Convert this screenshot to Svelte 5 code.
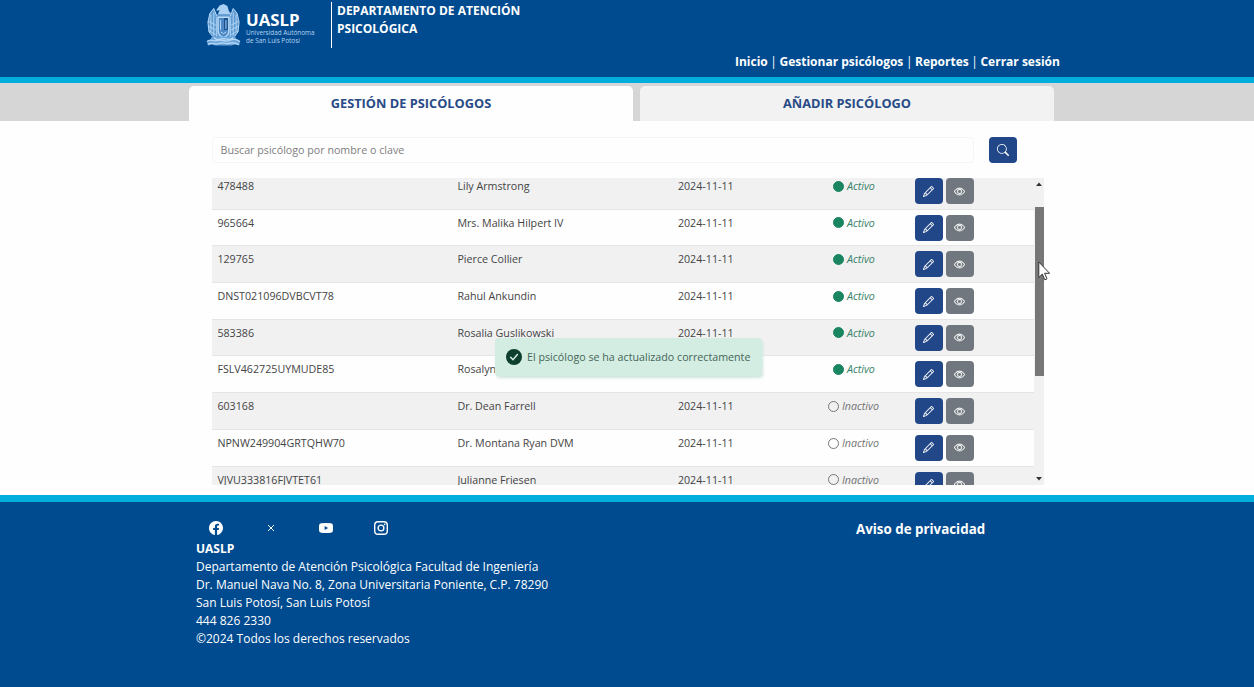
<script>
  const rows = [
    ['478488', 'Lily Armstrong', true],
    ['965664', 'Mrs. Malika Hilpert IV', true],
    ['129765', 'Pierce Collier', true],
    ['DNST021096DVBCVT78', 'Rahul Ankundin', true],
    ['583386', 'Rosalia Guslikowski', true],
    ['FSLV462725UYMUDE85', 'Rosalyn', true],
    ['603168', 'Dr. Dean Farrell', false],
    ['NPNW249904GRTQHW70', 'Dr. Montana Ryan DVM', false],
    ['VJVU333816FJVTET61', 'Julianne Friesen', false]
  ];
</script>

<div class="page">
  <header>
    <div class="brand">
      <svg class="crest" viewBox="0 0 36 44" fill="none" stroke="#b9daf7" stroke-width="1">
        <path d="M11 6l3-4 4-1.500 4 2 1.500 5 3 4H12l2-5-3 1z" fill="#a9cff2" stroke="none" />
        <path d="M8 5L4 10 2 19l1 10 4 5 5 2h12l6-2 3-5 1-10-2-9-4-5-2 6H11z" fill="#5f9bd2" stroke="none" />
        <path d="M8 5L4 10 2 19l1 10 4 5M28 5l4 5 2 9-1 10-4 5M8 5l3 8M28 5l-3 8" />
        <path d="M5 11v18M8 9v24M11 14v20M31 11v18M28 9v24M25 14v20M2 18l8 4M2 23l8 4M3 28l7 4M34 18l-8 4M34 23l-8 4M33 28l-7 4" stroke-width=".9" />
        <path d="M12.500 14h11v14c0 4-3 6-5.500 7-2.500-1-5.500-3-5.500-7z" fill="#4a87c4" stroke-width="1.400" />
        <path d="M18.500 15h4v12h-4z" fill="#174f91" stroke="none" />
        <path d="M20.500 17v9M15 17v10M15 29l3 2 3-2" />
        <path d="M6 34h24l2 4 3 1-1 4-4-1-4 1H10l-4-1-4 1-1-4 3-1z" fill="#6aa5da" stroke="none" />
        <path d="M1 39c4-4 7 1 11-1s8 2 12 0 7-2 11 1M2 42c4-3 7 1 11-1s7 1 10 0 7-1 11 1M8 35l3 2 7-1 7 1 3-2" stroke-width="1.300" />
      </svg>
      <div class="wordmark"><strong>UASLP</strong><span>Universidad Autónoma</span><span>de San Luis Potosí</span></div>
      <div class="dept">DEPARTAMENTO DE ATENCIÓN<br />PSICOLÓGICA</div>
    </div>
    <nav><b>Inicio</b><i>|</i><b>Gestionar psicólogos</b><i>|</i><b>Reportes</b><i>|</i><b>Cerrar sesión</b></nav>
  </header>

  <div class="tabs">
    <div class="tab active"><span>GESTIÓN DE PSICÓLOGOS</span></div>
    <div class="tab"><span>AÑADIR PSICÓLOGO</span></div>
  </div>

  <main>
    <div class="search">
      <div class="field">Buscar psicólogo por nombre o clave</div>
      <button aria-label="Buscar">
        <svg viewBox="0 0 16 16" width="12" height="12" fill="currentColor"><path d="M11.742 10.344a6.5 6.5 0 1 0-1.397 1.398h-.001q.044.06.098.115l3.85 3.85a1 1 0 0 0 1.415-1.414l-3.85-3.85a1 1 0 0 0-.115-.1zM12 6.5a5.5 5.5 0 1 1-11 0 5.5 5.5 0 0 1 11 0" /></svg>
      </button>
    </div>
    <div class="list">
      <div class="rows">
        {#each rows as [key, name, active]}
          <div class="row">
            <span class="key">{key}</span>
            <span class="name">{name}</span>
            <span class="date">2024-11-11</span>
            <span class="state" class:active><span class="dot"></span><em>{active ? 'Activo' : 'Inactivo'}</em></span>
            <span class="actions">
              <button aria-label="Editar">
                <svg viewBox="0 0 16 16" width="11" height="11" fill="currentColor" stroke="currentColor" stroke-width=".3"><path d="M12.146.146a.5.5 0 0 1 .708 0l3 3a.5.5 0 0 1 0 .708l-10 10a.5.5 0 0 1-.168.11l-5 2a.5.5 0 0 1-.65-.65l2-5a.5.5 0 0 1 .11-.168zM11.207 2.5 13.5 4.793 14.793 3.5 12.5 1.207zm1.586 3L10.5 3.207 4 9.707V10h.5a.5.5 0 0 1 .5.5v.5h.5a.5.5 0 0 1 .5.5v.5h.293zm-9.761 5.175-.106.106-1.528 3.821 3.821-1.528.106-.106A.5.5 0 0 1 5 12.5V12h-.5a.5.5 0 0 1-.5-.5V11h-.5a.5.5 0 0 1-.468-.325" /></svg>
              </button>
              <button class="gray" aria-label="Ver">
                <svg viewBox="0 0 16 16" width="11" height="11" fill="currentColor" stroke="currentColor" stroke-width=".4"><path d="M16 8s-3-5.500-8-5.500S0 8 0 8s3 5.500 8 5.500S16 8 16 8M1.173 8a13 13 0 0 1 1.660-2.043C4.120 4.668 5.880 3.500 8 3.500s3.879 1.168 5.168 2.457A13 13 0 0 1 14.828 8q-.086.130-.195.288c-.335.480-.830 1.120-1.465 1.755C11.879 11.332 10.119 12.500 8 12.500s-3.879-1.168-5.168-2.457A13 13 0 0 1 1.172 8z" /><path d="M8 5.500a2.500 2.500 0 1 0 0 5 2.500 2.500 0 0 0 0-5M4.500 8a3.500 3.500 0 1 1 7 0 3.500 3.500 0 0 1-7 0" /></svg>
              </button>
            </span>
          </div>
        {/each}
      </div>
      <div class="scrollbar">
        <svg width="6" height="4" viewBox="0 0 6 4"><path d="M0 4L3 0.500 6 4z" fill="#333" /></svg>
        <div class="thumb"></div>
        <svg class="down" width="6" height="4" viewBox="0 0 6 4"><path d="M0 0L3 3.500 6 0z" fill="#333" /></svg>
      </div>
    </div>
  </main>

  <footer>
    <div class="info">
      <div class="social">
        <svg viewBox="0 0 16 16" width="14" height="14" fill="currentColor"><path d="M16 8.049c0-4.446-3.582-8.050-8-8.050C3.580 0-.002 3.603-.002 8.050c0 4.017 2.926 7.347 6.750 7.951v-5.625h-2.030V8.050H6.750V6.275c0-2.017 1.195-3.131 3.022-3.131.876 0 1.791.157 1.791.157v1.980h-1.009c-.993 0-1.303.621-1.303 1.258v1.510h2.218l-.354 2.326H9.250V16c3.824-.604 6.750-3.934 6.750-7.951" /></svg>
        <svg viewBox="0 0 14 14" width="14" height="14" fill="none" stroke="currentColor"><path d="M4 4l6 6M10 4L4 10" /></svg>
        <svg viewBox="0 0 14 14" width="14" height="14"><path d="M2 2.200Q7 1.600 12 2.200 14 2.500 14 5v4q0 2.500-2 2.800-5 .500-10 0Q0 11.500 0 9V5q0-2.500 2-2.800z" fill="currentColor" /><path d="M5.600 4.900v4.200L9.200 7z" fill="#004b93" /></svg>
        <svg viewBox="0 0 14 14" width="14" height="14" fill="none" stroke="currentColor" stroke-width="1.400"><rect x=".7" y=".7" width="12.600" height="12.600" rx="3.400" /><circle cx="7" cy="7" r="2.900" /><circle cx="10.700" cy="3.300" r=".85" fill="currentColor" stroke="none" /></svg>
      </div>
      <strong>UASLP</strong>
      <p>Departamento de Atención Psicológica Facultad de Ingeniería</p>
      <p>Dr. Manuel Nava No. 8, Zona Universitaria Poniente, C.P. 78290</p>
      <p>San Luis Potosí, San Luis Potosí</p>
      <p>444 826 2330</p>
      <p>©2024 Todos los derechos reservados</p>
    </div>
    <strong class="privacy">Aviso de privacidad</strong>
  </footer>

  <div class="toast">
    <svg viewBox="0 0 16 16" width="16" height="16"><circle cx="8" cy="8" r="8" fill="#0e3f2e" /><path d="M4.600 8.200l2.400 2.500 4.400-5.200" fill="none" stroke="#d5eee3" stroke-width="1.500" stroke-linecap="round" /></svg>
    <span>El psicólogo se ha actualizado correctamente</span>
  </div>
  <svg class="cursor" viewBox="0 0 12 20" width="12" height="20"><path d="M.8 1v15.500l3.500-3.400 2.500 5.700 2.200-1-2.400-5.500h5z" fill="#fff" stroke="#333" stroke-width="1" /></svg>
</div>

<style>
  :global(body) { margin: 0; overflow: hidden; }
  .page { position: relative; width: 1254px; height: 687px; display: flex; flex-direction: column; font-family: "Open Sans", sans-serif; background: #fefefe; overflow: hidden; white-space: nowrap; }
  header { height: 77px; border-bottom: 6px solid #00aedb; background: #004b90; color: #fff; display: flex; flex-direction: column; justify-content: space-between; }
  .brand { display: flex; padding: 2px 0 0 206px; }
  .crest { width: 35px; height: 44px; margin-top: 1px; }
  .wordmark { width: 85px; padding: 9px 0 0 5px; display: flex; flex-direction: column; box-sizing: border-box; }
  .wordmark strong { font-size: 16.800px; line-height: 18px; }
  .wordmark span { font-size: 6.400px; line-height: 8px; color: #b9d5f0; }
  .dept { margin-left: 5px; height: 46px; border-left: 1px solid #fff; padding-left: 5px; font-size: 12px; line-height: 18px; font-weight: 700; }
  nav { display: flex; font-size: 12px; line-height: 16px; padding: 0 0 7px 735px; }
  nav i { font-style: normal; width: 11.700px; text-align: center; }
  .tabs { height: 38px; background: #d6d6d6; display: flex; gap: 7px; padding-left: 189px; }
  .tab { width: 414px; margin-top: 3px; background: #f2f2f2; border-radius: 5px 5px 0 0; text-align: center; color: #284b86; font-size: 12.800px; line-height: 35px; font-weight: 700; }
  .tab.active { width: 444px; background: #fefefe; }
  main { height: 374px; padding: 0 210px 0 212px; box-sizing: border-box; }
  .search { display: flex; gap: 15px; padding-top: 16px; height: 57px; box-sizing: border-box; }
  .field { width: 762px; height: 26px; box-sizing: border-box; border: 1px solid #f5f5f5; border-radius: 4px; padding-left: 7.500px; color: #7e7e7e; font-size: 10.700px; line-height: 24px; }
  button { width: 28px; height: 26px; padding: 0; border: 0; border-radius: 4px; background: #214788; color: #fff; display: flex; align-items: center; justify-content: center; }
  button.gray { background: #70777e; }
  .list { height: 307px; display: flex; overflow: hidden; }
  .rows { width: 822px; margin-top: -5px; flex: none; }
  .row { height: 36.700px; box-sizing: border-box; border-bottom: 1px solid #e5e5e5; display: grid; grid-template-columns: 240px 220.500px 150px 86.500px 1fr; padding-left: 5.400px; font-size: 10.700px; line-height: 26.400px; color: #444; }
  .row:nth-child(odd) { background: #f1f1f2; }
  .state { display: flex; gap: 3px; align-items: center; height: 26.400px; color: #737373; }
  .state.active { padding-left: 5px; color: #378269; }
  .dot { width: 11px; height: 11px; box-sizing: border-box; border: 1px solid #777; border-radius: 50%; }
  .active .dot { background: #198561; border-color: #198561; }
  .actions { display: flex; gap: 3px; padding: 5px 0 0 .5px; }
  .scrollbar { width: 10px; flex: none; background: #f1f1f1; display: flex; flex-direction: column; align-items: center; padding-top: 4px; box-sizing: border-box; }
  .thumb { width: 9px; height: 169px; margin-top: 21px; background: #777; }
  .down { margin: auto 0 4px; }
  footer { flex: 1; border-top: 7px solid #00aedb; background: #004b90; color: #fff; display: flex; }
  .info { width: 856px; padding: 19px 0 0 196px; font-size: 12px; line-height: 18px; box-sizing: border-box; flex: none; }
  .info strong { display: block; }
  .info p { margin: 0; }
  .social { display: flex; gap: 41px; padding: 0 0 4.500px 12.500px; }
  .social svg { display: block; }
  .privacy { font-size: 13.350px; line-height: 18px; padding-top: 18px; }
  .toast { position: absolute; left: 495px; top: 338px; width: 267px; height: 38px; background: #d3ede2; border-radius: 4px; box-shadow: 1px 2px 3px #cfe5dc; display: flex; align-items: center; gap: 5px; padding-left: 11px; box-sizing: border-box; font-size: 10.700px; color: #466558; }
  .toast svg { flex: none; }
  .cursor { position: absolute; left: 1038px; top: 261px; }
</style>
